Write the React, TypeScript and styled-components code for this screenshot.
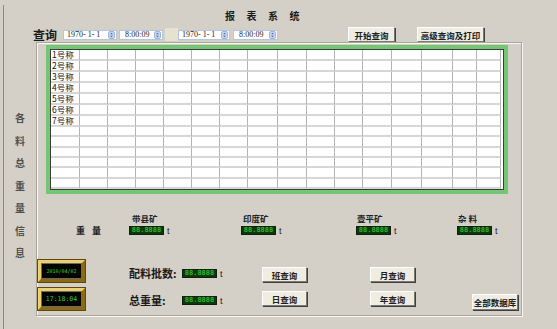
import React from 'react';
import styled, { createGlobalStyle } from 'styled-components';

const GlobalStyle = createGlobalStyle`
  html, body {
    margin: 0;
    padding: 0;
    background: #d4d0c8;
  }
  body {
    font-family: "Noto Sans CJK SC", "Liberation Sans", sans-serif;
    color: #202020;
  }
`;

const colWidths = [29, 28, 28, 28, 28, 28, 28, 30, 29, 28, 28, 29, 30, 31, 24, 24];
const rowLabels = ['1号称', '2号称', '3号称', '4号称', '5号称', '6号称', '7号称'];
const ROWS = 13;

const ores = [
  { name: '带县矿', pad: 3 },
  { name: '印度矿', pad: 2 },
  { name: '壹平矿', pad: 1 },
  { name: '杂 料', pad: 1 },
];

const Frame = styled.div`
  box-sizing: border-box;
  width: 554px;
  height: 324px;
  margin: 5px 0 0 3px;
  border-left: 1px solid #8a8a8a;
  display: flex;
  flex-direction: column;
`;

const TitleBar = styled.div`
  height: 22px;
  box-sizing: border-box;
  padding: 5px 0 0 221px;
  font-size: 10px;
  line-height: 12px;
  font-weight: 700;
  letter-spacing: 11.5px;
  color: #1a1a1a;
`;

const QueryRow = styled.div`
  height: 15px;
  display: flex;
  align-items: center;
`;

const QueryLabel = styled.span`
  width: 30px;
  margin-left: 29px;
  font-size: 12px;
  font-weight: 700;
  line-height: 15px;
  color: #1a1a1a;
`;

const Spin = styled.div<{ $w: number; $gap: number }>`
  box-sizing: border-box;
  width: ${(p) => p.$w}px;
  height: 10px;
  margin-left: ${(p) => p.$gap}px;
  background: #fff;
  border: 1px solid #b6c4dc;
  display: flex;
  align-items: center;
  justify-content: space-between;
  padding: 0 1px 0 3px;
  font-family: "Liberation Serif", serif;
  font-size: 8px;
  line-height: 8px;
  color: #222;
  white-space: pre;
`;

const Tint = styled.div`
  width: 13px;
  height: 13px;
  margin-left: 2px;
  background: #e6e2cf;
`;

const Btn = styled.button<{ $w: number; $h?: number; $gap?: number }>`
  box-sizing: border-box;
  width: ${(p) => p.$w}px;
  height: ${(p) => p.$h ?? 15}px;
  margin-left: ${(p) => p.$gap ?? 0}px;
  padding: 0;
  background: #efede2;
  border: 1px solid;
  border-color: #ffffff #7a7a72 #7a7a72 #ffffff;
  box-shadow: 1px 1px 0 #404040;
  font-family: "Noto Sans CJK SC", sans-serif;
  font-size: 8.5px;
  font-weight: 700;
  line-height: 10px;
  color: #202020;
  white-space: nowrap;
`;

const Body = styled.div`
  display: flex;
  height: 274px;
`;

const Side = styled.div`
  width: 32px;
  padding-top: 65px;
  display: flex;
  flex-direction: column;
  align-items: center;
  font-size: 10px;
  font-weight: 700;
  line-height: 22.5px;
  color: #505050;
`;

const Panel = styled.div`
  box-sizing: border-box;
  width: 486px;
  height: 274px;
  border: 1px solid #a9a598;
  box-shadow: inset 1px 1px 0 #f8f8f4, 1px 1px 0 #f8f8f4;
  display: flex;
  flex-direction: column;
`;

const GridBox = styled.div`
  width: 452px;
  height: 139px;
  margin: 2px 0 0 9px;
  border: 4px solid #74c674;
  outline: 1px solid #3c3c3c;
  outline-offset: -5px;
  padding: 1px;
  background: #fff;
  display: grid;
  grid-template-columns: ${colWidths.map((w) => `${w}px`).join(' ')};
  grid-template-rows: repeat(${ROWS}, 1fr);
`;

const Cell = styled.div`
  box-sizing: border-box;
  display: flex;
  align-items: center;
  border-right: 1px solid #b4b4b4;
  border-bottom: 2px solid #d6d6d6;
  padding-left: 1px;
  font-size: 8.5px;
  line-height: 9px;
  color: #111;
  white-space: nowrap;
`;

const Weights = styled.div`
  margin: 20px 0 0 39px;
  display: grid;
  grid-template-columns: 53px 112px 115px 101px 60px;
  grid-template-rows: 9px 9px;
  row-gap: 3px;
  align-items: center;
`;

const OreName = styled.span<{ $pad: number }>`
  padding-left: ${(p) => p.$pad}px;
  font-size: 8.5px;
  font-weight: 700;
  line-height: 9px;
  color: #222;
  white-space: pre;
`;

const RowLabel = styled.span`
  font-size: 9px;
  font-weight: 700;
  line-height: 9px;
  letter-spacing: 7px;
  color: #222;
`;

const Reading = styled.div`
  display: flex;
  align-items: flex-end;
  gap: 3px;
`;

const Lcd = styled.span`
  box-sizing: border-box;
  width: 35px;
  height: 9px;
  background: #0a3a0a;
  border: 1px solid #102010;
  font-family: "DejaVu Sans Mono", monospace;
  font-size: 7px;
  font-weight: 700;
  line-height: 7px;
  color: #34b234;
  text-align: center;
  white-space: nowrap;
`;

const Unit = styled.span`
  font-family: "Liberation Sans", sans-serif;
  font-size: 9px;
  line-height: 8px;
  color: #202020;
`;

const Bottom = styled.div`
  margin: 25px 0 0 1px;
  display: flex;
  align-items: flex-start;
`;

const Column = styled.div<{ $top: number; $left: number; $rowGap: number }>`
  display: flex;
  flex-direction: column;
  margin-left: ${(p) => p.$left}px;
  padding-top: ${(p) => p.$top}px;
  gap: ${(p) => p.$rowGap}px;
`;

const Clock = styled.div<{ $size: number }>`
  box-sizing: border-box;
  width: 47px;
  height: 22px;
  border: 3px solid;
  border-color: #ecd070 #8c6a12 #8c6a12 #ecd070;
  box-shadow: 0 0 0 1px #5c4812, inset 0 0 0 1px #6a6a6a;
  background: #050505;
  display: flex;
  align-items: center;
  justify-content: center;
  font-family: "DejaVu Sans Mono", monospace;
  font-size: ${(p) => p.$size}px;
  color: #2fd02f;
  white-space: nowrap;
`;

const StatRow = styled.div`
  width: 133px;
  height: 10px;
  display: grid;
  grid-template-columns: 53px auto;
  align-items: center;
`;

const StatLabel = styled.span`
  font-size: 11px;
  font-weight: 700;
  line-height: 10px;
  color: #1a1a1a;
  white-space: nowrap;
`;

function Spinner() {
  return (
    <svg width="7" height="8" viewBox="0 0 7 8">
      <rect x="0.5" y="0.5" width="6" height="7" rx="1.5" fill="#c9d8f2" stroke="#9fb4da" />
      <path d="M2 3.2 L3.5 1.8 L5 3.2 Z" fill="#4d66a8" />
      <path d="M2 4.8 L3.5 6.2 L5 4.8 Z" fill="#4d66a8" />
    </svg>
  );
}

function Field({ value, w, gap }: { value: string; w: number; gap: number }) {
  return (
    <Spin $w={w} $gap={gap}>
      <span>{value}</span>
      <Spinner />
    </Spin>
  );
}

function Meter() {
  return (
    <Reading>
      <Lcd>88.8888</Lcd>
      <Unit>t</Unit>
    </Reading>
  );
}

export default function App() {
  const cells: React.ReactElement[] = [];
  for (let r = 0; r < ROWS; r++) {
    for (let c = 0; c < colWidths.length; c++) {
      cells.push(<Cell key={`${r}-${c}`}>{c === 0 ? rowLabels[r] ?? '' : ''}</Cell>);
    }
  }

  return (
    <>
      <GlobalStyle />
      <Frame>
        <TitleBar>报表系统</TitleBar>
        <QueryRow>
          <QueryLabel>查询</QueryLabel>
          <Field value="1970- 1- 1" w={54} gap={0} />
          <Field value=" 8:00:09" w={44} gap={2} />
          <Tint />
          <Field value="1970- 1- 1" w={52} gap={0} />
          <Field value=" 8:00:09" w={45} gap={3} />
          <Btn $w={47} $gap={70}>开始查询</Btn>
          <Btn $w={67} $gap={22}>高级查询及打印</Btn>
        </QueryRow>
        <Body>
          <Side>
            {'各料总重量信息'.split('').map((ch) => (
              <span key={ch}>{ch}</span>
            ))}
          </Side>
          <Panel>
            <GridBox>{cells}</GridBox>
            <Weights>
              <span />
              {ores.map((o) => (
                <OreName key={o.name} $pad={o.pad}>
                  {o.name}
                </OreName>
              ))}
              <RowLabel>重量</RowLabel>
              {ores.map((o) => (
                <Meter key={o.name} />
              ))}
            </Weights>
            <Bottom>
              <Column $left={0} $top={0} $rowGap={6}>
                <Clock $size={5}>2010/04/02</Clock>
                <Clock $size={6.5}>17:18:04</Clock>
              </Column>
              <Column $left={44} $top={8} $rowGap={17}>
                <StatRow>
                  <StatLabel>配料批数:</StatLabel>
                  <Meter />
                </StatRow>
                <StatRow>
                  <StatLabel>总重量:</StatLabel>
                  <Meter />
                </StatRow>
              </Column>
              <Column $left={0} $top={7} $rowGap={9}>
                <Btn $w={45}>班查询</Btn>
                <Btn $w={45}>日查询</Btn>
              </Column>
              <Column $left={63} $top={7} $rowGap={9}>
                <Btn $w={45}>月查询</Btn>
                <Btn $w={45}>年查询</Btn>
              </Column>
              <Column $left={57} $top={34} $rowGap={0}>
                <Btn $w={46} $h={16}>全部数据库</Btn>
              </Column>
            </Bottom>
          </Panel>
        </Body>
      </Frame>
    </>
  );
}
